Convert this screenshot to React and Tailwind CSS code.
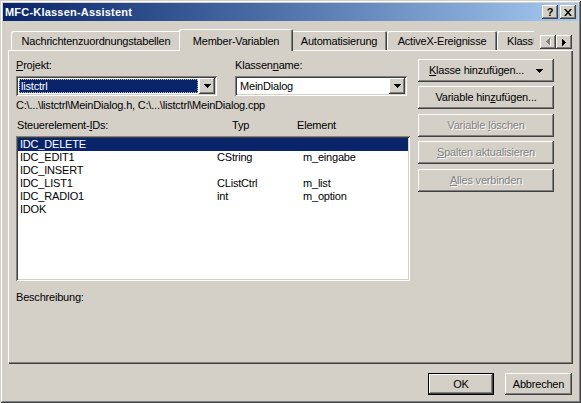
import React from 'react'

// Win2000 klassische 3D-Kanten
const raised = 'shadow-[inset_-1px_-1px_#404040,inset_1px_1px_#ffffff,inset_-2px_-2px_#808080,inset_2px_2px_#d4d0c8]'
const sunken = 'shadow-[inset_1px_1px_#808080,inset_-1px_-1px_#ffffff,inset_2px_2px_#404040,inset_-2px_-2px_#d4d0c8]'

function ArrowDown({ color = '#000000' }) {
    return (
        <svg width="7" height="4" viewBox="0 0 7 4" className="block">
            <path d="M0 0H7V1H6V2H5V3H4V4H3V3H2V2H1V1H0Z" fill={color} />
        </svg>
    )
}

function ArrowRight({ color = '#000000' }) {
    return (
        <svg width="4" height="7" viewBox="0 0 4 7" className="block">
            <path d="M0 0V7H1V6H2V5H3V4H4V3H3V2H2V1H1V0Z" fill={color} />
        </svg>
    )
}

function ArrowLeftDisabled() {
    return (
        <svg width="5" height="8" viewBox="0 0 5 8" className="block">
            <path d="M5 1V8H4V7H3V6H2V5H1V4H2V3H3V2H4V1Z" fill="#ffffff" />
            <path d="M4 0V7H3V6H2V5H1V4H0V3H1V2H2V1H3V0Z" fill="#808080" />
        </svg>
    )
}

function DropButton() {
    return (
        <div className={`w-[16px] h-[16px] bg-[#d4d0c8] ${raised} flex items-center justify-center`}>
            <ArrowDown />
        </div>
    )
}

function Combo({ value, focused, width }) {
    return (
        <div className={`h-[20px] p-[2px] bg-white ${sunken} flex`} style={{ width }}>
            <div className="flex-1 p-[1px]">
                {focused ? (
                    <div className="h-full bg-[#0a246a] text-white border border-dotted border-[#c8c4a8] pl-[1px] leading-[12px]">
                        {value}
                    </div>
                ) : (
                    <div className="h-full pl-[2px] leading-[14px]">{value}</div>
                )}
            </div>
            <DropButton />
        </div>
    )
}

function Button({ children, disabled, className = '' }) {
    return (
        <div
            className={`h-[23px] bg-[#d4d0c8] ${raised} flex items-center justify-center whitespace-pre ${disabled ? 'text-[#808080] [text-shadow:1px_1px_0_#ffffff]' : ''} ${className}`}
        >
            {children}
        </div>
    )
}

function Tab({ label, width, active, clipped }) {
    if (active) {
        return (
            <div
                className="relative z-10 h-[22px] -mb-px -mx-[2px] bg-[#d4d0c8] rounded-t-[2px] shadow-[inset_1px_1px_#ffffff,inset_-1px_0_#404040,inset_-2px_0_#808080] flex justify-center pt-[6px]"
                style={{ width }}
            >
                {label}
            </div>
        )
    }
    if (clipped) {
        // letzte Karte, vom Rollbereich abgeschnitten
        return (
            <div className="h-[19px] flex rounded-tl-[2px] shadow-[inset_1px_1px_#ffffff]" style={{ width }}>
                <div className="flex-1 pl-[10px] pt-[4px] whitespace-nowrap">{label}</div>
                <svg width="3" height="19" viewBox="0 0 3 19" className="block">
                    <polyline points="1,1 2,3 1,5 2,7 1,9 2,11 1,13 2,15 1,17 2,19" fill="none" stroke="#808080" strokeWidth="1" />
                </svg>
            </div>
        )
    }
    return (
        <div
            className="h-[19px] rounded-t-[2px] whitespace-nowrap pt-[4px] flex justify-center shadow-[inset_1px_1px_#ffffff,inset_-1px_0_#404040,inset_-2px_0_#808080]"
            style={{ width }}
        >
            {label}
        </div>
    )
}

const eintraege = [
    { id: 'IDC_DELETE', typ: '', element: '' },
    { id: 'IDC_EDIT1', typ: 'CString', element: 'm_eingabe' },
    { id: 'IDC_INSERT', typ: '', element: '' },
    { id: 'IDC_LIST1', typ: 'CListCtrl', element: 'm_list' },
    { id: 'IDC_RADIO1', typ: 'int', element: 'm_option' },
    { id: 'IDOK', typ: '', element: '' },
]

export default function App() {
    return (
        <div className="w-[581px] h-[403px] bg-[#d4d0c8] p-[3px] flex flex-col font-['Liberation_Sans',Arial,sans-serif] text-[11px] leading-[13px] tracking-[-0.2px] text-black shadow-[inset_1px_1px_#d4d0c8,inset_-1px_-1px_#404040,inset_2px_2px_#ffffff,inset_-2px_-2px_#808080] overflow-hidden select-none">
            {/* Titelleiste */}
            <div className="h-[18px] bg-linear-to-r from-[#0a246a] to-[#a6caf0] flex items-center pl-[2px] pr-[2px]">
                <span className="text-white font-bold tracking-[0.2px]">MFC-Klassen-Assistent</span>
                <div className="ml-auto flex gap-[2px]">
                    <div className={`w-[16px] h-[14px] bg-[#d4d0c8] ${raised} flex items-center justify-center font-bold text-[11px] leading-[11px] pt-px`}>?</div>
                    <div className={`w-[16px] h-[14px] bg-[#d4d0c8] ${raised} flex items-center justify-center`}>
                        <svg width="8" height="7" viewBox="0 0 8 7" className="block">
                            <path d="M0 0H2L4 2.4L6 0H8L5 3.5L8 7H6L4 4.6L2 7H0L3 3.5Z" fill="#000000" />
                        </svg>
                    </div>
                </div>
            </div>

            {/* Registerkarten */}
            <div className="mt-[8px] h-[21px] pl-[8px] flex items-end">
                <Tab label="Nachrichtenzuordnungstabellen" width={170} />
                <Tab label="Member-Variablen" width={114} active />
                <Tab label="Automatisierung" width={96} />
                <Tab label="ActiveX-Ereignisse" width={110} />
                <Tab label="Klass" width={37} clipped />
                <div className="ml-auto mr-[6px] mb-[1px] flex">
                    <div className={`w-[16px] h-[14px] bg-[#d4d0c8] ${raised} flex items-center justify-center`}>
                        <ArrowLeftDisabled />
                    </div>
                    <div className={`w-[16px] h-[14px] bg-[#d4d0c8] ${raised} flex items-center justify-center`}>
                        <ArrowRight />
                    </div>
                </div>
            </div>

            {/* Seite */}
            <div className="ml-[5px] w-[565px] h-[314px] pt-[9px] pl-[8px] flex gap-[8px] shadow-[inset_1px_1px_#ffffff,inset_-1px_-1px_#404040,inset_-2px_-2px_#808080]">
                <div className="w-[394px] flex flex-col">
                    <div className="flex">
                        <div className="w-[201px]">
                            <div><span className="underline">P</span>rojekt:</div>
                            <div className="mt-[4px]">
                                <Combo value="listctrl" focused width={201} />
                            </div>
                        </div>
                        <div className="ml-[18px] w-[172px]">
                            <div>Klassen<span className="underline">n</span>ame:</div>
                            <div className="mt-[4px]">
                                <Combo value="MeinDialog" width={172} />
                            </div>
                        </div>
                    </div>

                    <div className="mt-[3px] whitespace-nowrap">C:\...\listctrl\MeinDialog.h, C:\...\listctrl\MeinDialog.cpp</div>

                    <div className="mt-[7px] flex pl-[1px]">
                        <div className="w-[215px]">Steuerelement-<span className="underline">I</span>Ds:</div>
                        <div className="w-[65px]">Typ</div>
                        <div>Element</div>
                    </div>

                    <div className={`mt-[4px] h-[145px] p-[2px] bg-white ${sunken}`}>
                        {eintraege.map((e, idx) => (
                            <div
                                key={e.id}
                                className={`h-[13px] grid grid-cols-[197px_86px_1fr] pl-[2px] whitespace-nowrap ${idx === 0 ? 'bg-[#0a246a] text-white' : ''}`}
                            >
                                <span>{e.id}</span>
                                <span>{e.typ}</span>
                                <span>{e.element}</span>
                            </div>
                        ))}
                    </div>

                    <div className="mt-[10px]">Beschreibung:</div>
                </div>

                <div className="w-[136px] flex flex-col">
                    <Button>
                        <span><span className="underline">K</span>lasse hinzufügen...</span>
                        <span className="ml-[12px]"><ArrowDown /></span>
                    </Button>
                    <Button className="mt-[4px]"><span>Variable hin<span className="underline">z</span>ufügen...</span></Button>
                    <Button disabled className="mt-[5px]"><span>Variable <span className="underline">l</span>öschen</span></Button>
                    <Button disabled className="mt-[4px]"><span><span className="underline">S</span>palten aktualisieren</span></Button>
                    <Button disabled className="mt-[5px]"><span><span className="underline">A</span>lles verbinden</span></Button>
                </div>
            </div>

            {/* Dialogschaltflächen */}
            <div className="mt-[9px] flex justify-end pr-[6px]">
                <div className="w-[66px] h-[22px] border border-black">
                    <div className={`h-full bg-[#d4d0c8] ${raised} flex items-center justify-center`}>OK</div>
                </div>
                <div className={`ml-[11px] w-[67px] h-[22px] bg-[#d4d0c8] ${raised} flex items-center justify-center`}>Abbrechen</div>
            </div>
        </div>
    )
}
